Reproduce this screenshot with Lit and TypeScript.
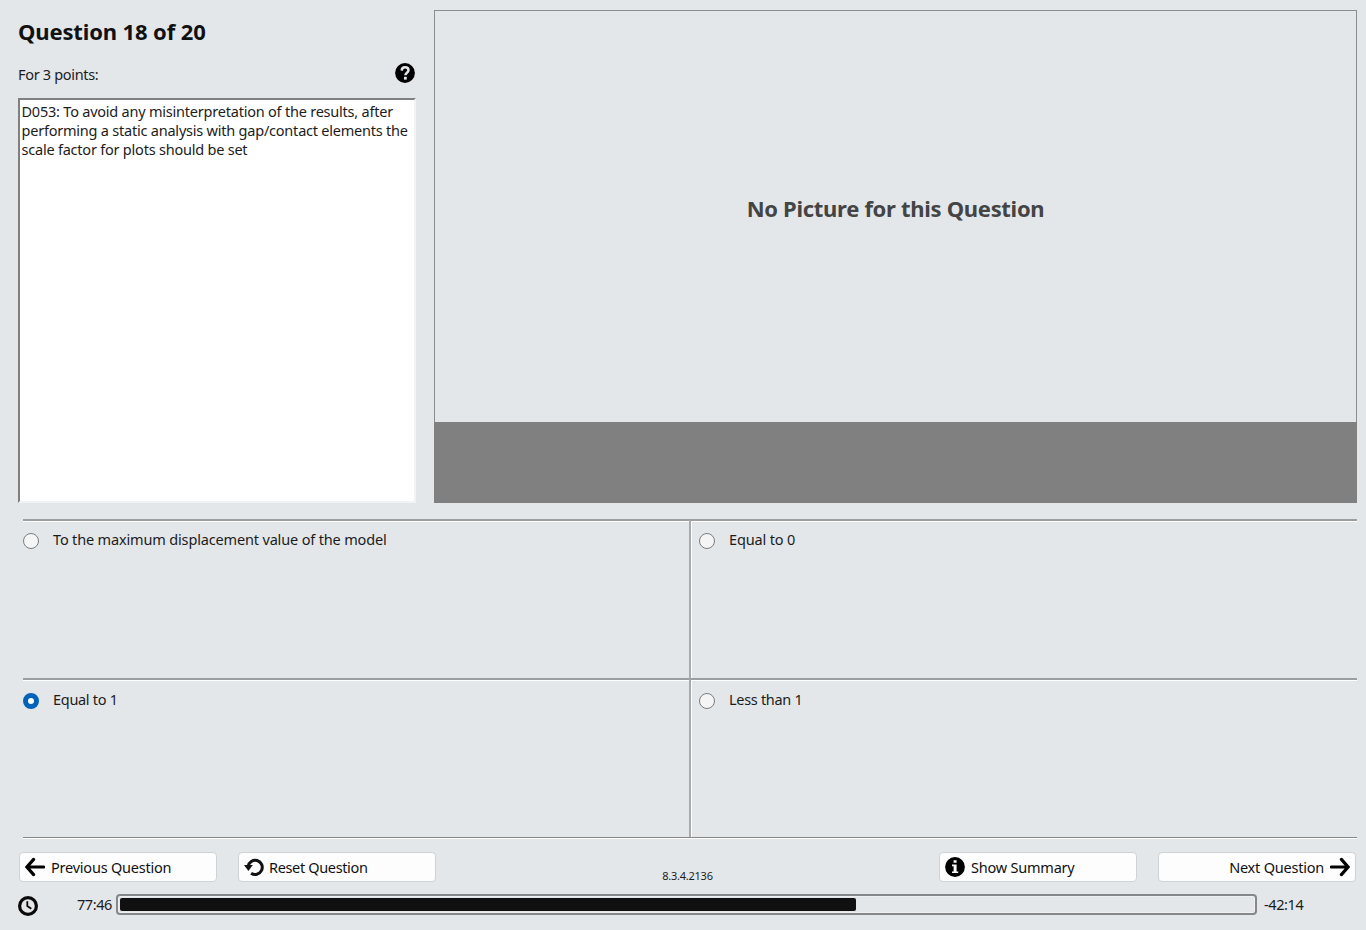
import { LitElement, html, css, svg } from "lit";
import { customElement, property, state } from "lit/decorators.js";
import { classMap } from "lit/directives/class-map.js";

const icons: Record<string, unknown> = {
  help: svg`<circle cx="10" cy="10" r="9.9" fill="#000"/><path d="M6.7 7.6C6.8 5.3 8.3 4.3 10.1 4.3c2 0 3.4 1.1 3.4 2.9 0 2.5-3.1 2.5-3.1 5" fill="none" stroke="#e3e7ea" stroke-width="2.5"/><rect x="9" y="13.8" width="2.8" height="2.8" fill="#e3e7ea"/>`,
  info: svg`<circle cx="10" cy="10" r="9.9" fill="#000"/><path d="M8.6 3.2h3v2.6h-3zM7 7.5h4.6v6.9h1.6v1.7H7v-1.7h1.6V9.2H7z" fill="#fdfdfd"/>`,
  left: svg`<path d="M18.6 10H2.4M8.6 2.4 1.9 10l6.7 7.6" fill="none" stroke="#000" stroke-width="3.2" stroke-linecap="round"/>`,
  right: svg`<path d="M1.4 10h16.2M11.4 2.4l6.7 7.6-6.7 7.6" fill="none" stroke="#000" stroke-width="3.2" stroke-linecap="round"/>`,
  reset: svg`<path d="M4.1 9.5A7.1 7.1 0 1 1 7.1 16.2" fill="none" stroke="#111" stroke-width="3"/><path d="M0 8h8.8L4.4 14z" fill="#111"/>`,
  clock: svg`<circle cx="10" cy="10" r="8.4" fill="none" stroke="#0a0a0a" stroke-width="3.2"/><path d="M9.3 5.3v4.8l4 2.7" fill="none" stroke="#0a0a0a" stroke-width="1.8"/>`,
};

@customElement("quiz-icon")
class QuizIcon extends LitElement {
  static styles = css`
    :host { display: block; width: 20px; height: 20px; flex: none; }
    .glyph { display: block; width: 20px; height: 20px; }
  `;
  @property() name = "help";
  render() {
    return html`<svg class="glyph" viewBox="0 0 20 20">${icons[this.name]}</svg>`;
  }
}

@customElement("app-root")
class AppRoot extends LitElement {
  static styles = css`
    :host {
      display: block; box-sizing: border-box; width: 1366px; height: 930px; overflow: hidden;
      background: #e3e7ea; color: #1c1c1c;
      font: 14.5px/19px "Noto Sans", "Open Sans", sans-serif; letter-spacing: -0.22px;
    }
    * { box-sizing: border-box; }
    .top { display: flex; height: 519px; padding: 10px 9px 16px 18px; }
    .side { width: 398px; display: flex; flex-direction: column; }
    .title { margin: 0; padding-top: 7px; height: 52px; font-size: 22px; line-height: 28px; font-weight: 700; color: #111; letter-spacing: -0.13px; }
    .points { display: flex; justify-content: space-between; height: 36px; padding: 1px 1px 0 0; }
    .label { padding-top: 2px; letter-spacing: -0.32px; }
    .text { flex: 1; background: #fff; padding: 2px 0 0 1.5px; border: 2px solid; border-color: #808080 #f1f3f4 #f1f3f4 #808080; white-space: pre; }
    .picture { flex: 1; margin-left: 18px; border: 1px solid #8b8d8e; display: flex; flex-direction: column; }
    .empty { flex: 1; display: flex; align-items: center; justify-content: center; padding-bottom: 18px; font-size: 22px; line-height: 28px; font-weight: 700; color: #444; letter-spacing: -0.3px; }
    .band { height: 81px; margin: 0 -1px -1px; background: #808080; }
    .answers { margin: 0 9px 0 23px; height: 320px; display: grid; grid-template-columns: 666px 1fr; grid-template-rows: 159px 159px 2px; }
    .answer { display: flex; padding: 10px 0 0; border-top: 2px solid #9b9d9f; box-shadow: inset 0 1px #fff; letter-spacing: -0.16px; }
    .answer.lower { padding-top: 11px; letter-spacing: -0.3px; }
    .answer.second { border-left: 2px solid #a8aaac; box-shadow: inset 1px 1px #fff; padding-left: 8px; }
    .caption { margin-top: -1px; }
    .rule { grid-column: 1 / 3; height: 2px; border-top: 1px solid #858789; border-bottom: 1px solid #fff; }
    .radio { width: 16px; height: 16px; border: 1px solid #7b7d7f; border-radius: 50%; background: #f5f5f5; margin: 2px 14px 0 0; flex: none; }
    .radio.on { border: 5px solid #0062b8; background: #fff; }
    .actions { display: flex; height: 42px; padding: 13px 10px 0 19px; }
    .btn { width: 198px; height: 30px; display: flex; align-items: center; gap: 6px; padding: 1px 5px; font: inherit; letter-spacing: inherit; color: #111; background: #fdfdfd; border: 1px solid #cfd3d6; border-radius: 4px; }
    .btn.end { justify-content: flex-end; }
    .btn.gap { margin-left: 21px; }
    .btn.tight { gap: 5px; letter-spacing: -0.35px; }
    .version { flex: 1; text-align: center; padding-top: 15px; font-size: 11px; line-height: 18px; letter-spacing: -0.25px; }
    .timer { display: flex; align-items: center; height: 26px; padding: 1px 10px 0 18px; margin-top: 10px; letter-spacing: -0.4px; }
    .clock { margin-top: 3px; }
    .elapsed { width: 74px; text-align: right; margin-right: 4px; }
    .bar { width: 1141px; height: 21px; padding: 2px; border: 2px solid #858789; border-radius: 4px; box-shadow: inset 0 0 0 1px #eef0f1; }
    .fill { height: 13px; border-radius: 2px; background: #101010; }
    .left { margin-left: 7px; }
  `;

  @state() private selected = 2;
  private answers = ["To the maximum displacement value of the model", "Equal to 0", "Equal to 1", "Less than 1"];
  private progress = 65;

  render() {
    return html`
      <section class="top">
        <div class="side">
          <h1 class="title"><span>Question 18 of 20</span></h1>
          <div class="points"><span class="label">For 3 points:</span><quiz-icon name="help"></quiz-icon></div>
          <div class="text">${"D053: To avoid any misinterpretation of the results, after\nperforming a static analysis with gap/contact elements the\nscale factor for plots should be set"}</div>
        </div>
        <div class="picture">
          <div class="empty"><span>No Picture for this Question</span></div>
          <div class="band"></div>
        </div>
      </section>
      <section class="answers">
        ${this.answers.map((answer, i) => html`
          <div class=${classMap({ answer: true, second: i % 2 === 1, lower: i > 1 })} @click=${() => (this.selected = i)}>
            <span class=${classMap({ radio: true, on: i === this.selected })}></span><span class="caption">${answer}</span>
          </div>`)}
        <div class="rule"></div>
      </section>
      <section class="actions">
        <button class="btn"><quiz-icon name="left"></quiz-icon><span>Previous Question</span></button>
        <button class="btn gap tight"><quiz-icon name="reset"></quiz-icon><span>Reset Question</span></button>
        <span class="version">8.3.4.2136</span>
        <button class="btn"><quiz-icon name="info"></quiz-icon><span>Show Summary</span></button>
        <button class="btn end gap"><span>Next Question</span><quiz-icon name="right"></quiz-icon></button>
      </section>
      <section class="timer">
        <quiz-icon class="clock" name="clock"></quiz-icon>
        <span class="elapsed">77:46</span>
        <div class="bar"><div class="fill" style="width:${this.progress}%"></div></div>
        <span class="left">-42:14</span>
      </section>
    `;
  }
}
